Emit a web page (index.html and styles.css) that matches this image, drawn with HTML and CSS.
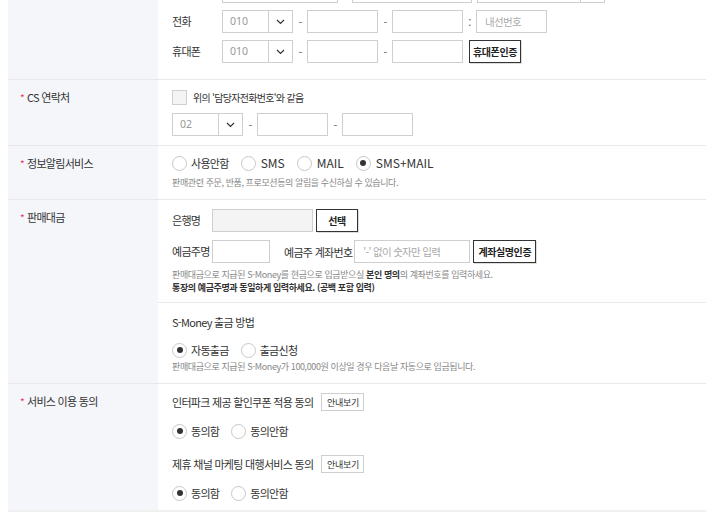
FILE: index.html
```html
<!DOCTYPE html>
<html lang="ko">
<head>
<meta charset="utf-8">
<title>판매자 정보</title>
<link rel="stylesheet" href="styles.css">
</head>
<body>
<div class="form">
  <div class="row">
    <div class="th"></div>
    <div class="td">
      <div class="line">
        <span class="sublabel"></span>
        <span class="box inp-email"></span>
        <span class="sep"></span>
        <span class="box inp-domain"></span>
        <span class="box sel sel-domain"><span class="val"></span><span class="arrow"></span></span>
      </div>
      <div class="line">
        <span class="sublabel">전화</span>
        <span class="box sel"><span class="val">010</span><span class="arrow"><svg width="9" height="6" viewBox="0 0 9 6"><path d="M1 1l3.5 3.5L8 1" fill="none" stroke="#333" stroke-width="1.2"/></svg></span></span>
        <span class="sep">-</span>
        <span class="box inp"></span>
        <span class="sep">-</span>
        <span class="box inp"></span>
        <span class="sep colon">:</span>
        <span class="box inp ph">내선번호</span>
      </div>
      <div class="line">
        <span class="sublabel">휴대폰</span>
        <span class="box sel"><span class="val">010</span><span class="arrow"><svg width="9" height="6" viewBox="0 0 9 6"><path d="M1 1l3.5 3.5L8 1" fill="none" stroke="#333" stroke-width="1.2"/></svg></span></span>
        <span class="sep">-</span>
        <span class="box inp"></span>
        <span class="sep">-</span>
        <span class="box inp"></span>
        <span class="btn btn-phone">휴대폰인증</span>
      </div>
    </div>
  </div>

  <div class="row">
    <div class="th"><span class="req">*</span>CS 연락처</div>
    <div class="td td-cs">
      <div class="check-line"><span class="checkbox"></span><span class="check-text">위의 '담당자전화번호'와 같음</span></div>
      <div class="line">
        <span class="box sel"><span class="val">02</span><span class="arrow"><svg width="9" height="6" viewBox="0 0 9 6"><path d="M1 1l3.5 3.5L8 1" fill="none" stroke="#333" stroke-width="1.2"/></svg></span></span>
        <span class="sep">-</span>
        <span class="box inp"></span>
        <span class="sep">-</span>
        <span class="box inp"></span>
      </div>
    </div>
  </div>

  <div class="row">
    <div class="th"><span class="req">*</span>정보알림서비스</div>
    <div class="td td-noti">
      <div class="radios">
        <span class="radio"><i></i>사용안함</span>
        <span class="radio en"><i></i>SMS</span>
        <span class="radio en"><i></i>MAIL</span>
        <span class="radio en on"><i></i>SMS+MAIL</span>
      </div>
      <p class="help help-noti">판매관련 주문, 반품, 프로모션등의 알림을 수신하실 수 있습니다.</p>
    </div>
  </div>

  <div class="row">
    <div class="th"><span class="req">*</span>판매대금</div>
    <div class="td td-split">
      <div class="sec sec-account">
        <div class="line">
          <span class="sublabel sl-bank">은행명</span>
          <span class="box bank"></span>
          <span class="btn btn-select">선택</span>
        </div>
        <div class="line">
          <span class="sublabel sl-bank">예금주명</span>
          <span class="box owner"></span>
          <span class="acc-label">예금주 계좌번호</span>
          <span class="box account ph">'-' 없이 숫자만 입력</span>
          <span class="btn btn-verify">계좌실명인증</span>
        </div>
        <div class="help-block">
          <p class="help">판매대금으로 지급된 S-Money를 현금으로 입금받으실 <b>본인 명의</b>의 계좌번호를 입력하세요.</p>
          <p class="help strong">통장의 예금주명과 동일하게 입력하세요. (공백 포함 입력)</p>
        </div>
      </div>
      <div class="sec sec-money">
        <p class="title">S-Money 출금 방법</p>
        <div class="radios">
          <span class="radio on"><i></i>자동출금</span>
          <span class="radio"><i></i>출금신청</span>
        </div>
        <p class="help help-money">판매대금으로 지급된 S-Money가 100,000원 이상일 경우 다음날 자동으로 입금됩니다.</p>
      </div>
    </div>
  </div>

  <div class="row row-last">
    <div class="th"><span class="req">*</span>서비스 이용 동의</div>
    <div class="td td-agree">
      <div class="agree-line"><span>인터파크 제공 할인쿠폰 적용 동의</span><span class="btn-info">안내보기</span></div>
      <div class="radios">
        <span class="radio on"><i></i>동의함</span>
        <span class="radio"><i></i>동의안함</span>
      </div>
      <div class="agree-line second"><span>제휴 채널 마케팅 대행서비스 동의</span><span class="btn-info">안내보기</span></div>
      <div class="radios">
        <span class="radio on"><i></i>동의함</span>
        <span class="radio"><i></i>동의안함</span>
      </div>
    </div>
  </div>
</div>
</body>
</html>
```

FILE: styles.css
```css
* { box-sizing: border-box; margin: 0; padding: 0; }
body {
  font-family: "Noto Sans CJK KR", "Noto Sans", sans-serif;
  font-size: 11px;
  color: #333;
  background: #fff;
  letter-spacing: -0.7px;
}
.form { width: 698px; margin: -30px 0 0 8px; }
.row {
  display: grid;
  grid-template-columns: 150px 1fr;
  border-bottom: 1px solid #e9e9e9;
}
.row-last { border-bottom: 2px solid #f0f0f0; }
.th {
  background: #f5f6fa;
  padding: 9px 0 0 12px;
  line-height: 17px;
}
.req { color: #e8336d; margin-right: 3px; font-size: 10px; }
.td {
  padding: 10px 0 16px 14px;
  display: flex;
  flex-direction: column;
  gap: 7px;
}
.line { display: flex; align-items: center; height: 23px; }
.sublabel { width: 50px; line-height: 23px; }
.box {
  height: 23px;
  border: 1px solid #cfcfcf;
  background: #fff;
  display: block;
}
.ph { color: #aaa; padding-left: 8px; line-height: 21px; font-size: 10.5px; white-space: nowrap; }
.sel { width: 71px; display: flex; }
.sel .val { flex: 1; padding-left: 7px; color: #999; line-height: 21px; font-family: "Noto Sans", sans-serif; font-size: 10.5px; letter-spacing: 0; }
.sel .arrow {
  width: 24px;
  border-left: 1px solid #cfcfcf;
  display: flex;
  align-items: center;
  justify-content: center;
}
.inp { width: 71px; }
.inp-email { width: 116px; }
.inp-domain { width: 120px; }
.sel-domain { width: 128px; margin-left: 5px; }
.sep { width: 14px; text-align: center; color: #666; }
.colon { width: 13px; }
.btn {
  height: 23px;
  border: 1px solid #333;
  background: #fff;
  font-weight: bold;
  font-size: 10px;
  color: #222;
  display: flex;
  align-items: center;
  justify-content: center;
  box-shadow: 1px 1px 0 #ddd;
  letter-spacing: -0.4px;
}
.btn-phone { width: 52px; margin-left: 6px; }

.td-cs { padding: 10px 0 9px 14px; gap: 8px; }
.check-line { display: flex; align-items: center; height: 15px; }
.checkbox {
  width: 15px; height: 15px;
  border: 1px solid #cfcfcf;
  background: #f4f4f4;
  margin-right: 6px;
}
.check-text { font-size: 10px; letter-spacing: -0.7px; }

.td-noti { padding: 9px 0 9px 14px; gap: 0; }
.radios { display: flex; align-items: center; height: 16px; gap: 12px; }
.radio { display: flex; align-items: center; gap: 4px; line-height: 16px; }
.radio.en { font-size: 12px; letter-spacing: 0; gap: 5px; }
.radio i {
  width: 15px; height: 15px;
  border: 1px solid #c8c8c8;
  border-radius: 50%;
  background: #fff;
  display: flex;
  align-items: center;
  justify-content: center;
}
.radio.on i::after {
  content: "";
  width: 6px; height: 6px;
  border-radius: 50%;
  background: #333;
}
.help { font-size: 9px; color: #888; line-height: 13px; letter-spacing: -0.4px; }
.help b { color: #333; }
.help.strong { color: #333; font-weight: bold; }
.help-noti { margin-top: 5px; line-height: 14px; }

.td-split { padding: 0; gap: 0; }
.sec { padding-left: 14px; }
.sec-account {
  padding-top: 9px;
  padding-bottom: 8px;
  border-bottom: 1px solid #e9e9e9;
  display: flex;
  flex-direction: column;
  gap: 8px;
}
.sl-bank { width: 40px; }
.bank { width: 101px; background: #f4f4f4; }
.btn-select { width: 42px; margin-left: 3px; }
.owner { width: 58px; }
.acc-label { margin-left: 14px; margin-right: 2px; white-space: nowrap; }
.account { width: 116px; }
.btn-verify { width: 63px; margin-left: 3px; }
.help-block { margin-top: -3px; }
.sec-money { padding-top: 11px; padding-bottom: 9px; }
.title { line-height: 16px; }
.sec-money .radios { margin-top: 12px; }
.help-money { margin-top: 2px; line-height: 14px; }

.td-agree { padding: 9px 0 9px 14px; gap: 0; }
.agree-line { display: flex; align-items: center; height: 18px; }
.agree-line.second { margin-top: 16px; }
.td-agree .radios { margin-top: 12px; }
.btn-info {
  margin-left: 8px;
  width: 43px; height: 18px;
  border: 1px solid #cfcfcf;
  font-size: 9px;
  letter-spacing: -0.3px;
  display: flex; align-items: center; justify-content: center;
  background: #fff;
}
```
